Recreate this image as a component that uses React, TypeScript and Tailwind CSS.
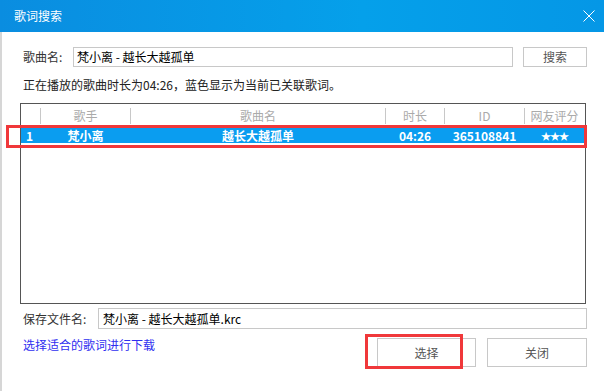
import React from "react";

const font = { fontFamily: '"Noto Sans CJK SC", "Microsoft YaHei", sans-serif' };

export default function App() {
  const cols = [
    { w: "w-[19px]", h: "", v: "1" },
    { w: "w-[90px]", h: "歌手", v: "梵小离" },
    { w: "w-[255px]", h: "歌曲名", v: "越长大越孤单" },
    { w: "w-[59px]", h: "时长", v: "04:26" },
    { w: "w-[80px]", h: "ID", v: "365108841" },
    { w: "w-[60px]", h: "网友评分", v: "★★★" },
  ];
  return (
    <div className="relative w-[604px] h-[391px] bg-white overflow-hidden text-[12px] text-[#222]" style={font}>
      <div className="h-[32px] flex items-center justify-between bg-[linear-gradient(90deg,#0a8de0,#05a0ea_60%,#0597e6)]">
        <span className="pl-[14px] text-white text-[12px] leading-[14px]">歌词搜索</span>
        <svg width="12" height="12" viewBox="0 0 12 12" className="mr-[9px]">
          <path d="M0.5 0.5 L11.5 11.5 M11.5 0.5 L0.5 11.5" stroke="white" strokeWidth="1" />
        </svg>
      </div>
      <div className="h-[359px] border-l-[2px] border-[#d6d6d6] flex flex-col">
        <div className="mt-[15px] flex items-center h-[20px]">
          <span className="ml-[21px] w-[50px] leading-[20px] text-[#333]">歌曲名:</span>
          <div className="w-[440px] h-[20px] border border-[#c8c8c8] px-[3px] leading-[18px] text-black">梵小离 - 越长大越孤单</div>
          <div className="ml-[10px] w-[64px] h-[20px] border border-[#c8c8c8] flex items-center justify-center text-[#555] leading-[18px]">搜索</div>
        </div>
        <div className="mt-[11px] ml-[21px] leading-[14px] h-[14px] text-[#222]">正在播放的歌曲时长为04:26，蓝色显示为当前已关联歌词。</div>
        <div className="mt-[11px] ml-[18px] w-[566px] h-[201px] border border-[#555] flex flex-col">
          <div className="flex h-[24px] pt-[4px] pb-[4px]">
            {cols.map((c, i) => (
              <div
                key={i}
                className={`${c.w} h-[16px] leading-[16px] text-center text-[#aaaaaa] ${i > 0 ? "border-l border-[#c8c8c8]" : ""}`}
              >
                {c.h}
              </div>
            ))}
          </div>
          <div className="flex h-[15px] bg-[#0a9df0] text-white font-bold leading-[15px]">
            {cols.map((c, i) => (
              <div
                key={i}
                className={`${c.w} ${i === 0 ? "pl-[5px]" : "text-center border-l border-transparent"} ${i === 5 ? "text-[10px] tracking-[-1px]" : ""}`}
              >
                {c.v}
              </div>
            ))}
          </div>
        </div>
        <div className="mt-[4px] flex items-center h-[21px]">
          <span className="ml-[21px] w-[75px] text-[#333] leading-[21px]">保存文件名:</span>
          <div className="w-[489px] h-[21px] border border-[#c8c8c8] px-[4px] leading-[19px] text-black">梵小离 - 越长大越孤单.krc</div>
        </div>
        <div className="mt-[9px] flex items-start">
          <span className="ml-[21px] leading-[14px] text-[#2f2ff0]">选择适合的歌词进行下载</span>
          <div className="ml-auto mr-[17px] flex gap-[11px]">
            <div className="w-[99px] h-[29px] border border-[#c8c8c8] flex items-center justify-center text-[#555]">选择</div>
            <div className="w-[100px] h-[29px] border border-[#c8c8c8] flex items-center justify-center text-[#555]">关闭</div>
          </div>
        </div>
      </div>
      <div className="absolute left-[6px] top-[125px] w-[581px] h-[23px] border-[3px] border-[#f0383a]" />
      <div className="absolute left-[365px] top-[334px] w-[98px] h-[35px] border-[3px] border-[#f0383a]" />
    </div>
  );
}
